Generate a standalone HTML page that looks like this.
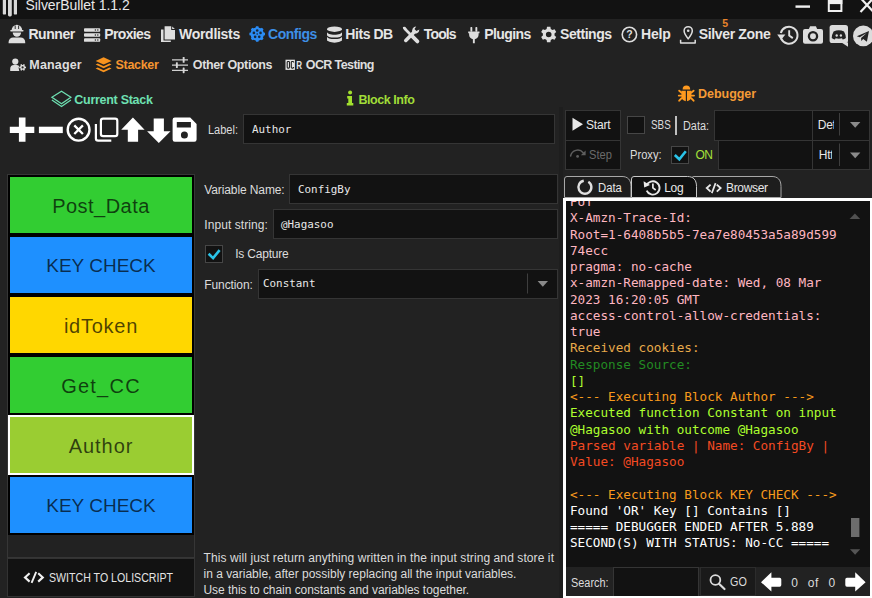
<!DOCTYPE html>
<html><head><meta charset="utf-8"><title>SilverBullet 1.1.2</title>
<style>
html,body{margin:0;padding:0;}
body{width:872px;height:598px;overflow:hidden;background:#222222;position:relative;font-family:"Liberation Sans",sans-serif;color:#e6e6e6;}
.a{position:absolute;white-space:nowrap;}
.box{position:absolute;box-sizing:border-box;}
svg{position:absolute;overflow:visible;}
#titlebar{left:0;top:0;width:872px;height:19px;background:#121212;}
.menu{font-weight:bold;font-size:14px;line-height:16px;color:#e6e6e6;letter-spacing:-0.3px;top:26px;}
.sub{font-weight:bold;font-size:12.5px;line-height:16px;color:#dedede;letter-spacing:-0.3px;}
.lbl{font-size:12px;line-height:14px;color:#dcdcdc;}
.inp{background:#121212;border:1px solid #353535;}
.fld{font-family:"DejaVu Sans Mono","Liberation Mono",monospace;font-size:10.9px;line-height:14px;color:#e8e8e8;}
.blk{left:8px;width:186px;height:60px;border:2px solid #000;text-align:center;font-size:19px;line-height:58px;color:rgba(0,0,0,0.7);}
.mx{font-size:20px;}
.chk{background:#121212;border:1px solid #464646;}
#logbox{left:565.5px;top:200.7px;width:304.2px;height:366px;background:#121212;overflow:hidden;}
#log{left:4.5px;top:-6.7px;width:280px;font-family:"DejaVu Sans Mono","Liberation Mono",monospace;font-size:12.67px;line-height:16.25px;white-space:pre;}
</style></head><body>
<div id="titlebar" class="box"></div>
<div class="a" id="title" style="left:25.5px;top:-4.3px;font-size:14px;line-height:18px;color:#e8e8e8;letter-spacing:-0.05px;">SilverBullet 1.1.2</div>
<svg width="872" height="598" viewBox="0 0 872 598" style="left:0;top:0;pointer-events:none">
<g fill="#d8d8d8"><rect x="2.8" y="-3" width="3.2" height="17.6" rx="1.2"/><rect x="8" y="-3" width="3.8" height="19.4" rx="1.4"/><rect x="13.8" y="-3" width="3.2" height="17.6" rx="1.2"/></g>
<g fill="none" stroke="#f0f0f0"><path d="M795.5 6.6h14.5" stroke-width="2.4"/><rect x="828.8" y="-2" width="12.6" height="13" stroke-width="2"/><path d="M828 1.6h14.4" stroke-width="5"/><path d="M860.5 -2l13 14M873.5 -2l-13 14" stroke-width="2.2"/></g>
<g fill="#dedede"><path d="M11.6 30.3a5.3 5.5 0 0 1 10.6 0z"/><rect x="10.2" y="29.9" width="13.4" height="1.7" rx=".8"/><path d="M12.7 32.6h8.4a4.2 4.2 0 0 1-8.4 0z"/><path d="M8.6 43.3v-1.2a4.6 4.6 0 0 1 4.6-4.6h7.4a4.6 4.6 0 0 1 4.6 4.6v1.2z"/></g>
<g stroke="#222" stroke-width=".9"><path d="M15.2 25.5v3.5M18.6 25.5v3.5"/></g>
<rect x="84" y="28.2" width="16.2" height="3.5" rx=".9" fill="#dedede"/>
<circle cx="95.4" cy="29.95" r=".75" fill="#222"/><circle cx="97.8" cy="29.95" r=".75" fill="#222"/>
<rect x="84" y="33.2" width="16.2" height="3.5" rx=".9" fill="#dedede"/>
<circle cx="95.4" cy="34.95" r=".75" fill="#222"/><circle cx="97.8" cy="34.95" r=".75" fill="#222"/>
<rect x="84" y="38.3" width="16.2" height="3.5" rx=".9" fill="#dedede"/>
<circle cx="95.4" cy="40.05" r=".75" fill="#222"/><circle cx="97.8" cy="40.05" r=".75" fill="#222"/>
<g fill="#dedede"><path d="M164.6 26.2h6.6v3.8h3.8v9.4h-10.4z"/><path d="M172.2 26.4l2.7 2.7h-2.7z"/><path d="M161 29.6h2.5v10.9h7.3v1.6h-9.8z"/></g>
<path fill="#2b8cf5" d="M263.51 32.42 L265.01 32.84 L265.01 35.16 L263.51 35.58 L262.78 37.34 L263.55 38.71 L261.91 40.35 L260.54 39.58 L258.78 40.31 L258.36 41.81 L256.04 41.81 L255.62 40.31 L253.86 39.58 L252.49 40.35 L250.85 38.71 L251.62 37.34 L250.89 35.58 L249.39 35.16 L249.39 32.84 L250.89 32.42 L251.62 30.66 L250.85 29.29 L252.49 27.65 L253.86 28.42 L255.62 27.69 L256.04 26.19 L258.36 26.19 L258.78 27.69 L260.54 28.42 L261.91 27.65 L263.55 29.29 L262.78 30.66Z"/>
<circle cx="257.2" cy="34" r="6.600" fill="#2b8cf5"/>
<circle cx="257.20" cy="30.50" r="1.300" fill="#18283c"/>
<circle cx="260.53" cy="32.92" r="1.300" fill="#18283c"/>
<circle cx="259.26" cy="36.83" r="1.300" fill="#18283c"/>
<circle cx="255.14" cy="36.83" r="1.300" fill="#18283c"/>
<circle cx="253.87" cy="32.92" r="1.300" fill="#18283c"/>
<circle cx="257.2" cy="34" r=".800" fill="#18283c"/>
<g fill="#dedede"><ellipse cx="334.5" cy="29.2" rx="7.5" ry="2.7"/>
<path d="M327 32.0c0 1.6 3.4 2.7 7.5 2.7s7.5-1.1 7.5-2.7v2.9c0 1.6-3.4 2.7-7.5 2.7s-7.5-1.1-7.5-2.7z"/>
<path d="M327 36.4c0 1.6 3.4 2.7 7.5 2.7s7.5-1.1 7.5-2.7v2.9c0 1.6-3.4 2.7-7.5 2.7s-7.5-1.1-7.5-2.7z"/>
<path d="M327 40.6c0 0 3.4 2.2 7.5 2.2s7.5-2.2 7.5-2.2v-1h-15z"/></g>
<g stroke="#dedede" fill="none" stroke-linecap="round"><path d="M405 29l6.200 6.200" stroke-width="2.700"/><path d="M412.4 36.4l5 5" stroke-width="3.8"/><path d="M414.2 32l-8.400 8.400" stroke-width="3.600"/></g>
<path fill="#dedede" d="M419.4 29.6a3.9 3.9 0 0 1-6.6 2.8a3.9 3.9 0 0 1 3.4-6l-1.7 2.6l1.8 1.9z"/>
<path fill="#dedede" d="M402.9 27l2.1-.3l1.6 1.9l-1.6 1.6l-1.9-1.4z"/>
<g fill="#dedede"><rect x="470.4" y="27" width="1.9" height="4.8" rx=".7"/><rect x="475.4" y="27" width="1.9" height="4.8" rx=".7"/><path d="M468.2 31.6h11.3v1.7h-.9v1.3a4.8 4.8 0 0 1-3.8 4.7v4h-1.9v-4a4.8 4.8 0 0 1-3.8-4.7v-1.3h-.9z"/></g>
<path fill="#dedede" fill-rule="evenodd" d="M550.78 40.02 L550.39 42.22 L547.01 42.22 L546.62 40.02 L544.96 39.06 L542.86 39.82 L541.17 36.89 L542.88 35.46 L542.88 33.54 L541.17 32.11 L542.86 29.18 L544.96 29.94 L546.62 28.98 L547.01 26.78 L550.39 26.78 L550.78 28.98 L552.44 29.94 L554.54 29.18 L556.23 32.11 L554.52 33.54 L554.52 35.46 L556.23 36.89 L554.54 39.82 L552.44 39.06Z M545.90 34.50 a2.80 2.80 0 1 0 5.60 0 a2.80 2.80 0 1 0 -5.60 0Z"/>
<circle cx="629.4" cy="34.5" r="7.2" fill="none" stroke="#dedede" stroke-width="1.6"/>
<text x="629.4" y="38.4" text-anchor="middle" font-family="Liberation Sans,sans-serif" font-weight="bold" font-size="10.5" fill="#dedede">?</text>
<g fill="none" stroke="#dedede" stroke-width="1.5" stroke-linejoin="round"><path d="M688.2 38.9c-2.6-3.4-4.1-5.7-4.1-8.1a4.1 4.1 0 0 1 8.2 0c0 2.4-1.5 4.7-4.1 8.100z"/><path d="M680.6 39.8v3.1h14.6v-3.100"/></g><circle cx="688.2" cy="30.7" r="1.3" fill="#dedede"/>
<g fill="none" stroke="#dedede" stroke-width="2"><path d="M781.2 38.600a8.500 8.500 0 1 0-.400-5.600"/><path d="M789.200 30.200v5.400l3.600 2.500" stroke-width="1.900"/></g><path fill="#dedede" d="M777.200 34.600h8.200l-4.400 5.400z"/>
<g fill="#dcdcdc"><rect x="803" y="29" width="20" height="14.700" rx="2"/><path d="M808.600 29.500l1.500-3.200h5.800l1.500 3.200z"/></g><circle cx="813" cy="36.200" r="4.100" fill="none" stroke="#222" stroke-width="2.300"/>
<g fill="#dcdcdc"><rect x="829.600" y="25" width="18.400" height="18" rx="2.600"/><path d="M841.500 42.500h6.500v4.200z"/></g>
<path fill="#222" d="M833.600 31.600q5.200-2.500 10.400 0q1.800 3.200 1.900 6.400q-1.500 1.200-3.200 1.500l-.7-1.200q-3.200.9-6.400 0l-.7 1.200q-1.700-.3-3.200-1.500q.1-3.200 1.900-6.400z"/><ellipse cx="836.700" cy="35.500" rx="1.150" ry="1.300" fill="#dcdcdc"/><ellipse cx="840.900" cy="35.500" rx="1.150" ry="1.300" fill="#dcdcdc"/>
<circle cx="863.300" cy="35.900" r="10.300" fill="#dcdcdc"/><path fill="#222" d="M856.800 36.200l12.200-5.200l-2.100 10.800l-3.700-2.700l-1.900 1.900l-.2-3.100l5.600-5l-7 4.300z"/>
<g fill="#dedede"><circle cx="15.300" cy="61.600" r="3.100"/><path d="M10.200 70.900v-2a3.800 3.800 0 0 1 3.800-3.800h2.600a3.800 3.800 0 0 1 2.500 1q-1.200 2.400.2 4.800z"/></g>
<path fill="#dedede" fill-rule="evenodd" d="M24.94 66.52 L26.02 66.65 L26.02 68.15 L24.94 68.28 L24.53 68.99 L24.96 69.99 L23.66 70.74 L23.01 69.87 L22.19 69.87 L21.54 70.74 L20.24 69.99 L20.67 68.99 L20.26 68.28 L19.18 68.15 L19.18 66.65 L20.26 66.52 L20.67 65.81 L20.24 64.81 L21.54 64.06 L22.19 64.93 L23.01 64.93 L23.66 64.06 L24.96 64.81 L24.53 65.81Z M21.50 67.40 a1.10 1.10 0 1 0 2.20 0 a1.10 1.10 0 1 0 -2.20 0Z"/>
<g fill="#f7931e"><path d="M103.600 57.200l8 3.700l-8 3.700l-8-3.700z"/><path d="M95.600 64.600l2.200-1l5.800 2.700l5.800-2.700l2.200 1l-8 3.700z"/><path d="M95.600 68.600l2.200-1l5.800 2.700l5.800-2.700l2.200 1l-8 3.700z"/></g>
<g stroke="#d0d0d0" stroke-width="1.300"><path d="M172 59.900h16M172 65.100h16M172 70.300h16"/></g><g fill="#d8d8d8"><rect x="182.700" y="57" width="1.900" height="5.800" rx=".6"/><rect x="175.900" y="62.200" width="1.900" height="5.800" rx=".6"/><rect x="182.700" y="67.400" width="1.900" height="5.800" rx=".6"/></g>
<rect x="285.500" y="59.700" width="9.400" height="10.200" fill="#e4e4e4"/><g fill="none" stroke="#222" stroke-width="1.100"><rect x="287.200" y="61.500" width="2.300" height="6.600" rx=".8"/><path d="M293.600 62.600v-.3a.8.8 0 0 0-.8-.8h-.7a.8.800 0 0 0-.8.800v5a.8.800 0 0 0 .8.800h.7a.8.800 0 0 0 .8-.8v-.300"/></g>
<text x="296.200" y="69" font-family="Liberation Sans,sans-serif" font-weight="bold" font-size="10.500" textLength="5.800" lengthAdjust="spacingAndGlyphs" fill="#e4e4e4">R</text>
<g fill="none" stroke="#6ee0b2" stroke-width="1.250" stroke-linejoin="miter"><path d="M51.900 97.300l9.600-6l9.400 6l-9.400 6.400z"/><path d="M51.900 100l9.600 6.500l9.400-6.500"/></g>
<g fill="#a2e02e"><circle cx="350.100" cy="92.500" r="2"/><path d="M347.200 95.900h4.800v7.200h1.300v2.500h-6.500v-2.500h1.500v-4.700h-1.100z"/></g>
<g fill="#ff9a1f"><path d="M682.600 89.600a3.800 4 0 0 1 7.600 0z"/><path d="M681.400 90.700h4.400v10.600q-4.400-.8-4.400-5.200z"/><path d="M687 90.700h4.400v5.400q0 4.400-4.400 5.200z"/></g><g stroke="#ff9a1f" stroke-width="1.900" fill="none" stroke-linecap="round"><path d="M681.400 92.600l-2.200-1.900M681.400 95.600h-2.600M681.400 98.300l-2.200 2.400M691.400 92.600l2.200-1.900M691.400 95.600h2.600M691.400 98.300l2.200 2.400"/></g>
<g fill="#ffffff"><path d="M18.900 117.600h6.600v9.100h8.800v6.400h-8.800v8.700h-6.600v-8.700h-9.100v-6.400h9.100z"/><rect x="38.900" y="126.700" width="23.900" height="6.400"/></g>
<circle cx="78.600" cy="129.700" r="10.900" fill="none" stroke="#ffffff" stroke-width="2.400"/><path d="M74.300 125.400l8.600 8.600M82.900 125.400l-8.600 8.600" stroke="#ffffff" stroke-width="2.300" fill="none"/>
<g fill="none" stroke="#ffffff" stroke-width="2.200"><rect x="100.900" y="118.700" width="16.400" height="17.500" rx="2.200"/><path d="M95.900 124v14.500a2.200 2.200 0 0 0 2.200 2.200h13.200"/></g>
<g fill="#ffffff"><path d="M132.900 117.500l11.700 12.200h-6.500v12h-10.300v-12h-6.600z"/><path d="M158.800 142.900l11.700-11.700h-6.600v-12.600h-10.200v12.600h-6.600z"/></g>
<path fill="#ffffff" fill-rule="evenodd" d="M174.800 117.600h15.400l6.400 6.400v15.600a2.200 2.200 0 0 1-2.200 2.200h-19.600a2.200 2.200 0 0 1-2.200-2.200v-19.800a2.200 2.200 0 0 1 2.200-2.200z M176.800 122h14.100v5.500h-14.100z M180.90 134.90 a3.50 3.50 0 1 0 7.00 0 a3.50 3.50 0 1 0 -7.00 0Z"/>
</svg>

<!-- main menu -->
<div class="a menu" style="left:28.4px;letter-spacing:-0.43px;">Runner</div>
<div class="a menu" style="left:104.3px;letter-spacing:-0.64px;">Proxies</div>
<div class="a menu" style="left:179px;letter-spacing:-0.28px;">Wordlists</div>
<div class="a menu" style="left:268px;letter-spacing:-0.47px;color:#3d8fe6;">Configs</div>
<div class="a menu" style="left:345.3px;letter-spacing:-0.44px;">Hits DB</div>
<div class="a menu" style="left:423.8px;letter-spacing:-0.86px;">Tools</div>
<div class="a menu" style="left:484.2px;letter-spacing:-0.57px;">Plugins</div>
<div class="a menu" style="left:560px;letter-spacing:-0.45px;">Settings</div>
<div class="a menu" style="left:641px;letter-spacing:-0.15px;">Help</div>
<div class="a menu" style="left:698.8px;letter-spacing:-0.35px;">Silver Zone</div>
<div class="a" style="left:722.3px;top:17.3px;font-size:10.5px;line-height:12px;font-weight:bold;color:#e8832a;">5</div>

<!-- sub menu -->
<div class="a sub" style="left:29.3px;top:57px;letter-spacing:0.17px;">Manager</div>
<div class="a sub" style="left:115.6px;top:57px;letter-spacing:-0.33px;color:#f59530;">Stacker</div>
<div class="a sub" style="left:192.8px;top:57px;letter-spacing:-0.36px;">Other Options</div>
<div class="a sub" style="left:305.8px;top:57px;letter-spacing:-0.61px;">OCR Testing</div>

<!-- headers -->
<div class="a sub" style="left:74.3px;top:92px;letter-spacing:-0.28px;color:#6ee0b2;">Current Stack</div>
<div class="a sub" style="left:358.4px;top:92px;letter-spacing:-0.44px;color:#a0dd38;">Block Info</div>
<div class="a sub" style="left:698px;top:86px;letter-spacing:-0.03px;color:#f59a36;">Debugger</div>

<!-- label -->
<div class="a lbl" style="transform:scaleX(0.917);transform-origin:0 0;left:208px;top:123px;">Label:</div>
<div class="box inp" style="left:243px;top:114px;width:312px;height:30px;"></div>
<div class="a fld" style="left:252px;top:123px;">Author</div>

<!-- stack list -->
<div class="box" style="left:7px;top:174px;width:188px;height:384px;border:1px solid #363636;"></div>
<div class="box blk mx" style="top:175px;background:#32cd32;letter-spacing:0.48px;">Post_Data</div>
<div class="box blk" style="top:235px;background:#1e90ff;">KEY CHECK</div>
<div class="box blk mx" style="top:295px;background:#ffd700;letter-spacing:0.75px;">idToken</div>
<div class="box blk mx" style="top:355px;background:#32cd32;letter-spacing:1.25px;">Get_CC</div>
<div class="box blk mx" style="top:415px;background:#9acd32;border-color:#fff;letter-spacing:0.96px;">Author</div>
<div class="box blk" style="top:475px;background:#1e90ff;">KEY CHECK</div>

<div class="box" style="left:7px;top:558px;width:188px;height:39px;background:#121212;border:1px solid #333;"></div>
<div class="a lbl" style="transform:scaleX(0.884);transform-origin:0 0;left:49px;top:571px;color:#e4e4e4;">SWITCH TO LOLISCRIPT</div>

<!-- block info -->
<div class="a lbl" style="left:204.3px;top:183px;letter-spacing:-0.11px;">Variable Name:</div>
<div class="box inp" style="left:289px;top:174px;width:269px;height:30px;"></div>
<div class="a fld" style="left:298px;top:183px;">ConfigBy</div>
<div class="a lbl" style="left:204.3px;top:218px;letter-spacing:0.07px;">Input string:</div>
<div class="box inp" style="left:273px;top:209px;width:285px;height:30px;"></div>
<div class="a fld" style="left:281px;top:218px;">@Hagasoo</div>
<div class="box chk" style="left:205px;top:245px;width:18px;height:18px;"></div>
<div class="a lbl" style="left:235.2px;top:247px;letter-spacing:-0.2px;">Is Capture</div>
<div class="a lbl" style="left:204.3px;top:278px;letter-spacing:-0.11px;">Function:</div>
<div class="box inp" style="left:258px;top:269px;width:300px;height:30px;"></div>
<div class="a fld" style="left:263px;top:277px;">Constant</div>

<div class="a lbl" id="desc" style="left:203.5px;top:550px;line-height:16px;letter-spacing:0.09px;">This will just return anything written in the input string and store it</div>
<div class="a lbl" style="left:203.5px;top:566px;line-height:16px;letter-spacing:-0.01px;">in a variable, after possibly replacing all the input variables.</div>
<div class="a lbl" style="left:203.5px;top:582px;line-height:16px;letter-spacing:-0.05px;">Use this to chain constants and variables together.</div>

<!-- debugger -->
<div class="box" style="left:558.5px;top:107px;width:4px;height:491px;background:#1e1e1e;"></div>
<div class="box inp" style="left:565px;top:110px;width:56px;height:31px;"></div>
<div class="a lbl" style="left:586px;top:118px;letter-spacing:-0.16px;color:#e8e8e8;">Start</div>
<div class="box inp" style="left:565px;top:140px;width:56px;height:30px;"></div>
<div class="a lbl" style="transform:scaleX(0.927);transform-origin:0 0;left:589.4px;top:148px;color:#6a6a6a;">Step</div>
<div class="box chk" style="left:626.5px;top:116px;width:18px;height:18px;"></div>
<div class="a lbl" style="left:650.5px;top:118px;transform:scaleX(0.82);transform-origin:0 0;">SBS</div>
<div class="box" style="left:675.2px;top:116px;width:1.6px;height:19px;background:#c0c0c0;"></div>
<div class="a lbl" style="transform:scaleX(0.906);transform-origin:0 0;left:682.6px;top:119px;">Data:</div>
<div class="box inp" style="left:714px;top:110px;width:99px;height:31px;"></div>
<div class="box inp" style="left:812px;top:110px;width:58px;height:31px;"></div>
<div class="a lbl" style="left:817.8px;top:118px;width:16.4px;overflow:hidden;letter-spacing:-0.3px;color:#e8e8e8;">Default</div>
<div class="a lbl" style="transform:scaleX(0.929);transform-origin:0 0;left:629.7px;top:148px;">Proxy:</div>
<div class="box chk" style="left:671px;top:146px;width:18px;height:18px;"></div>
<div class="a lbl" style="left:695.4px;top:148px;letter-spacing:-0.35px;color:#a5e03a;">ON</div>
<div class="box inp" style="left:718px;top:140px;width:95px;height:30px;"></div>
<div class="box inp" style="left:812px;top:140px;width:58px;height:30px;"></div>
<div class="a lbl" style="left:818.8px;top:148px;width:13.6px;overflow:hidden;letter-spacing:-0.3px;color:#e8e8e8;">Http</div>
<svg width="872" height="598" viewBox="0 0 872 598" style="left:0;top:0;pointer-events:none">
<path d="M572.500 117.800L583 124.300L572.500 130.700z" fill="#e8e8e8"/>
<g fill="none" stroke="#5e5e5e" stroke-width="1.500" stroke-linecap="round"><path d="M570.600 156a7.200 7.200 0 0 1 12.600-3.300"/></g><path d="M585.600 150.400v4.800h-4.800z" fill="#5e5e5e"/><circle cx="577.600" cy="156.400" r="1.400" fill="#5e5e5e"/>
<path d="M674.8 155.0l4.500 4.300l6.500-8" fill="none" stroke="#2ac3e8" stroke-width="2.600"/>
<path d="M208.6 253.8l4.500 4.300l6.500-8" fill="none" stroke="#2ac3e8" stroke-width="2.600"/>
<path d="M850.0 122.0h10.400l-5.200 5.800z" fill="#8a8a8a"/>
<path d="M850.0 152.4h10.400l-5.200 5.800z" fill="#8a8a8a"/>
<path d="M537.6 281.0h10.400l-5.200 5.800z" fill="#8a8a8a"/>
<g stroke="#3e3e3e" stroke-width="1"><path d="M839.500 113v22.500M839.500 143.500v22.500M527.500 273.500v20"/></g>
<path d="M564.5 197.500V179a2.500 2.500 0 0 1 2.500-2.500H622.0C627.5 176.500 631.0 179.500 631.0 186.500V197.500z" fill="#1d1d1d" stroke="#a8a8a8" stroke-width="1"/>
<path d="M691.5 197.500V179a2.500 2.500 0 0 1 2.500-2.500H772.0C777.5 176.500 781.0 179.500 781.0 186.500V197.500z" fill="#1d1d1d" stroke="#a8a8a8" stroke-width="1"/>
<path d="M631.5 197.500V179a2.500 2.500 0 0 1 2.500-2.500H687.5C693.0 176.500 696.5 179.500 696.5 186.500V197.500z" fill="#101010" stroke="#c8c8c8" stroke-width="1"/>
<path d="M588.34 181.69A6.5 6.5 0 1 1 583.77 180.80" fill="none" stroke="#e0e0e0" stroke-width="2.400"/>
<g fill="none" stroke="#e8e8e8" stroke-width="1.900"><path d="M646.700 190.600a6.700 6.700 0 1 0-.200-4.800"/><path d="M652.900 183.600v4.300l2.800 2.100" stroke-width="1.700"/></g><path fill="#e8e8e8" d="M643.600 181.200l.600 6.300l5.800-2.600z"/>
<g fill="none" stroke="#e8e8e8" stroke-width="1.900"><path d="M710.600 184.600l-3.800 3.500l3.800 3.500M716.800 184.600l3.800 3.500l-3.800 3.500"/><path d="M715.600 183.100l-3.800 10" stroke-width="1.700"/></g>
</svg>

<!-- tabs -->
<div class="a lbl" style="transform:scaleX(0.941);transform-origin:0 0;left:597.6px;top:181px;color:#e8e8e8;">Data</div>
<div class="a lbl" style="left:664.2px;top:181px;letter-spacing:-0.3px;color:#e8e8e8;">Log</div>
<div class="a lbl" style="left:726px;top:181px;letter-spacing:-0.33px;color:#e8e8e8;">Browser</div>

<!-- log -->
<div class="box" style="left:563px;top:198px;width:309px;height:400px;background:#fff;"></div>
<div id="logbox" class="box"><div id="log" class="a"><span style="color:#ffb6c1">PUT
X-Amzn-Trace-Id:
Root=1-6408b5b5-7ea7e80453a5a89d599
74ecc
pragma: no-cache
x-amzn-Remapped-date: Wed, 08 Mar
2023 16:20:05 GMT
access-control-allow-credentials:
true
</span><span style="color:#e8aa4a">Received cookies:
</span><span style="color:#228b22">Response Source:
</span><span style="color:#adff2f">[]
</span><span style="color:#f79a1c">&lt;--- Executing Block Author ---&gt;
</span><span style="color:#adff2f">Executed function Constant on input
@Hagasoo with outcome @Hagasoo
</span><span style="color:#f44a22">Parsed variable | Name: ConfigBy |
Value: @Hagasoo
</span>
<span style="color:#f79a1c">&lt;--- Executing Block KEY CHECK ---&gt;
</span><span style="color:#fff">Found 'OR' Key [] Contains []
===== DEBUGGER ENDED AFTER 5.889
SECOND(S) WITH STATUS: No-CC =====</span></div></div>

<!-- search -->
<div class="box" style="left:566px;top:567px;width:304px;height:29px;background:#222;"></div>
<div class="a lbl" style="transform:scaleX(0.908);transform-origin:0 0;left:570.6px;top:576px;">Search:</div>
<div class="box inp" style="left:613px;top:567px;width:86px;height:31px;border-bottom:none;"></div>
<div class="box" style="left:700px;top:567px;width:56px;height:29px;background:#1a1a1a;border:1px solid #2c2c2c;"></div>
<div class="a lbl" style="transform:scaleX(0.898);transform-origin:0 0;left:729.6px;top:575px;">GO</div>
<div class="a lbl" style="left:791.3px;top:576px;">0</div>
<div class="a lbl" style="left:807.8px;top:576px;letter-spacing:0.6px;">of</div>
<div class="a lbl" style="left:828.5px;top:576px;">0</div>
<div class="box" style="left:563px;top:596px;width:309px;height:2px;background:#fff;"></div>
<svg width="872" height="598" viewBox="0 0 872 598" style="left:0;top:0;pointer-events:none">
<path d="M849.600 219l5.300-5.400l5.300 5.400z" fill="#505050"/><rect x="851" y="518" width="8.400" height="19" fill="#6c6c6c"/><path d="M850 549.200h10.200l-5.100 5.600z" fill="#555"/>
<g fill="none" stroke="#dcdcdc"><circle cx="715.400" cy="580" r="4.900" stroke-width="1.800"/><path d="M719 583.700l5.500 5.300" stroke-width="2.200" stroke-linecap="round"/></g>
<g fill="none" stroke="#f0f0f0" stroke-width="2.100"><path d="M29.600 573.200l-4.600 4.200l4.600 4.200M38.200 573.200l4.600 4.200l-4.600 4.200"/><path d="M36.200 571.800l-4.600 11" stroke-width="1.900"/></g>
<g fill="#ffffff"><path d="M761 582.200l10.400-9.900v5.500h8.300a1.600 1.600 0 0 1 1.600 1.600v5.700a1.600 1.600 0 0 1-1.600 1.600h-8.300v4.900z"/><path d="M865.600 582.200l-10.400-9.900v5.500h-8.300a1.600 1.600 0 0 0-1.600 1.600v5.700a1.600 1.600 0 0 0 1.600 1.600h8.300v4.900z"/></g>
</svg>
</body></html>
